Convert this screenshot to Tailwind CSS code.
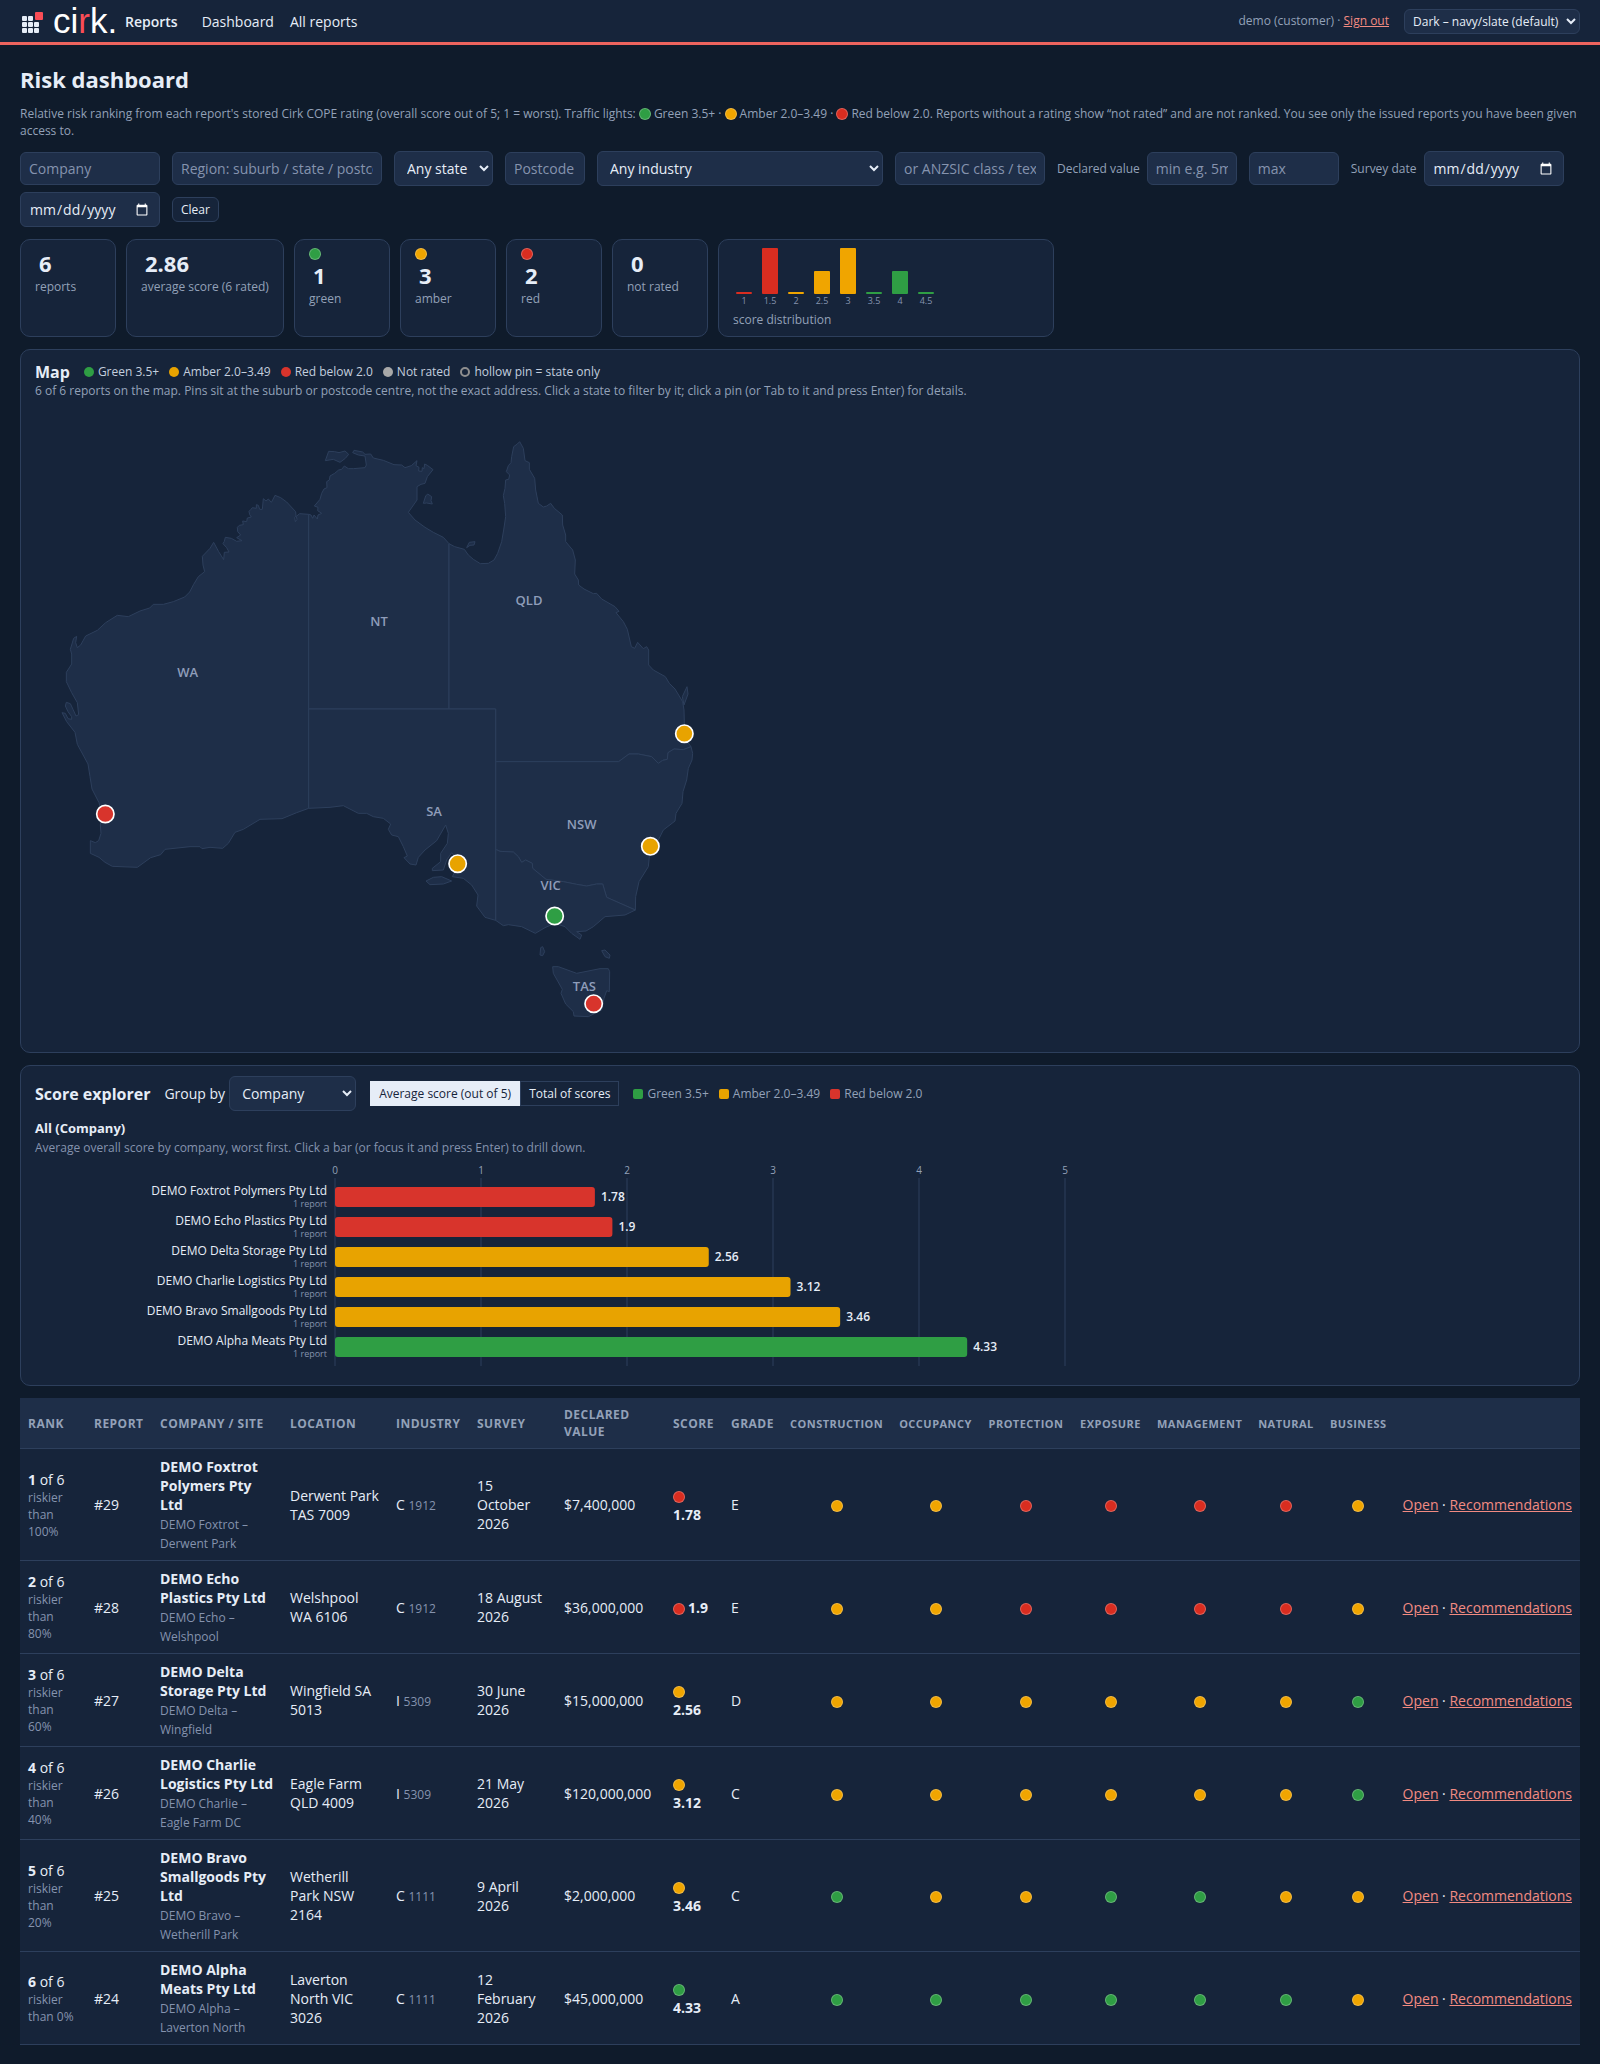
<!DOCTYPE html>
<html lang="en">
  <head>
    <meta charset="utf-8" />
    <title>Risk dashboard</title>
    <meta name="viewport" content="width=device-width, initial-scale=1.0" />
    <script src="https://cdn.jsdelivr.net/npm/@tailwindcss/browser@4"></script>
  </head>
  <body
    class="min-h-screen bg-[#0f1b2b] font-['Open_Sans',sans-serif] text-sm leading-[19px] text-[#e6edf7] scheme-dark"
  >
    <header
      class="flex h-[45px] items-center border-b-3 border-[#ee645e] bg-[#16243a] px-5"
    >
      <a href="#" aria-label="cirk." class="mr-2">
        <svg width="97" height="42" viewBox="0 0 97 42">
          <g fill="#e6edf7">
            <rect x="2" y="16" width="5" height="5" rx="1" />
            <rect x="8" y="16" width="5" height="5" rx="1" />
            <rect x="2" y="22" width="5" height="5" rx="1" />
            <rect x="8" y="22" width="5" height="5" rx="1" />
            <rect x="14" y="22" width="5" height="5" rx="1" />
            <rect x="2" y="28" width="5" height="5" rx="1" />
            <rect x="8" y="28" width="5" height="5" rx="1" />
            <rect x="14" y="28" width="5" height="5" rx="1" />
          </g>
          <rect x="15" y="12" width="8" height="8" rx="1" fill="#fa4d56" />
          <text
            x="33"
            y="33"
            font-size="35"
            fill="#ffffff"
            class="font-['Liberation_Sans',sans-serif]"
          >ci<tspan fill="#fa4d56">r</tspan>k.</text>
        </svg>
      </a>
      <span class="mr-6 font-semibold">Reports</span>
      <nav class="flex gap-4">
        <a href="#">Dashboard</a>
        <a href="#">All reports</a>
      </nav>
      <div class="ml-auto flex items-center gap-[15px] text-xs text-[#93a1b8]">
        <span
          >demo (customer) ·
          <a href="#" class="text-[#f28b82] underline">Sign out</a></span
        >
        <select
          aria-label="Theme"
          class="h-[25px] w-[176px] rounded-md border border-[#2d3f5c] bg-[#1e2e48] px-1 text-xs text-[#e6edf7]"
        >
          <option>Dark – navy/slate (default)</option>
        </select>
      </div>
    </header>

    <main class="px-5 pt-5 pb-4">
      <h1 class="text-[22px] leading-7 font-bold">Risk dashboard</h1>
      <p class="mt-3 text-xs leading-[17px] text-[#93a1b8]">
        Relative risk ranking from each report's stored Cirk COPE rating
        (overall score out of 5; 1 = worst). Traffic lights:
        <span class="mr-[3px] inline-block size-3 rounded-full border border-white/25 bg-[#2f9e44] align-[-2px]"></span>Green 3.5+ ·
        <span class="mr-[3px] inline-block size-3 rounded-full border border-white/25 bg-[#f0a500] align-[-2px]"></span>Amber 2.0–3.49 ·
        <span class="mr-[3px] inline-block size-3 rounded-full border border-white/25 bg-[#d92d20] align-[-2px]"></span>Red below 2.0. Reports without a rating show “not rated” and are not
        ranked. You see only the issued reports you have been given access to.
      </p>

      <form class="mt-3 flex flex-wrap items-center gap-x-3 gap-y-[6px]">
        <input
          type="text"
          aria-label="Company"
          placeholder="Company"
          class="h-[33px] w-[140px] rounded-md border border-[#2d3f5c] bg-[#1e2e48] px-2 placeholder:text-[#8593ae]"
        />
        <input
          type="text"
          aria-label="Region"
          placeholder="Region: suburb / state / postcode"
          class="h-[33px] w-[210px] rounded-md border border-[#2d3f5c] bg-[#1e2e48] px-2 placeholder:text-[#8593ae]"
        />
        <select
          aria-label="State"
          class="h-[35px] w-[99px] rounded-md border border-[#2d3f5c] bg-[#1e2e48] pr-0 pl-2"
        >
          <option>Any state</option>
        </select>
        <input
          type="text"
          aria-label="Postcode"
          placeholder="Postcode"
          class="h-[33px] w-[80px] rounded-md border border-[#2d3f5c] bg-[#1e2e48] px-2 placeholder:text-[#8593ae]"
        />
        <select
          aria-label="Industry"
          class="h-[35px] w-[286px] rounded-md border border-[#2d3f5c] bg-[#1e2e48] pr-0 pl-2"
        >
          <option>Any industry</option>
        </select>
        <input
          type="text"
          aria-label="ANZSIC class or text"
          placeholder="or ANZSIC class / text"
          class="h-[33px] w-[150px] rounded-md border border-[#2d3f5c] bg-[#1e2e48] px-2 placeholder:text-[#8593ae]"
        />
        <label class="flex items-center gap-[7px] text-xs text-[#93a1b8]">
          Declared value
          <input
            type="text"
            placeholder="min e.g. 5m"
            class="h-[33px] w-[90px] rounded-md border border-[#2d3f5c] bg-[#1e2e48] px-2 text-sm text-[#e6edf7] placeholder:text-[#8593ae]"
          />
        </label>
        <input
          type="text"
          aria-label="Maximum declared value"
          placeholder="max"
          class="h-[33px] w-[90px] rounded-md border border-[#2d3f5c] bg-[#1e2e48] px-2 placeholder:text-[#8593ae]"
        />
        <label class="flex items-center gap-[7px] text-xs text-[#93a1b8]">
          Survey date
          <input
            type="date"
            class="h-[35px] w-[140px] rounded-md border border-[#2d3f5c] bg-[#1e2e48] px-2 text-sm text-[#e6edf7]"
          />
        </label>
        <input
          type="date"
          aria-label="Survey date to"
          class="h-[35px] w-[140px] rounded-md border border-[#2d3f5c] bg-[#1e2e48] px-2"
        />
        <button
          type="button"
          class="h-[25px] rounded-md border border-[#2d3f5c] bg-[#16243a] px-2 text-xs"
        >
          Clear
        </button>
      </form>

      <!-- Summary cards -->
      <section class="mt-3 flex h-[98px] gap-[10px] text-xs leading-[17px] text-[#93a1b8]">
        <div class="w-24 rounded-[10px] border border-[#2d3f5c] bg-[#16243a] px-[14px] pt-[10px]">
          <b class="block pb-[2px] pl-1 text-[22px] leading-[26px] font-bold text-[#e6edf7]">6</b>reports
        </div>
        <div class="w-[158px] rounded-[10px] border border-[#2d3f5c] bg-[#16243a] px-[14px] pt-[10px] whitespace-nowrap">
          <b class="block pb-[2px] pl-1 text-[22px] leading-[26px] font-bold text-[#e6edf7]">2.86</b>average score (6 rated)
        </div>
        <div class="w-24 rounded-[10px] border border-[#2d3f5c] bg-[#16243a] px-[14px] pt-2">
          <i class="block size-3 rounded-full border border-white/25 bg-[#2f9e44]"></i>
          <b class="mt-[2px] block pb-[2px] pl-1 text-[22px] leading-[26px] font-bold text-[#e6edf7]">1</b>green
        </div>
        <div class="w-24 rounded-[10px] border border-[#2d3f5c] bg-[#16243a] px-[14px] pt-2">
          <i class="block size-3 rounded-full border border-white/25 bg-[#f0a500]"></i>
          <b class="mt-[2px] block pb-[2px] pl-1 text-[22px] leading-[26px] font-bold text-[#e6edf7]">3</b>amber
        </div>
        <div class="w-24 rounded-[10px] border border-[#2d3f5c] bg-[#16243a] px-[14px] pt-2">
          <i class="block size-3 rounded-full border border-white/25 bg-[#d92d20]"></i>
          <b class="mt-[2px] block pb-[2px] pl-1 text-[22px] leading-[26px] font-bold text-[#e6edf7]">2</b>red
        </div>
        <div class="w-24 rounded-[10px] border border-[#2d3f5c] bg-[#16243a] px-[14px] pt-[10px]">
          <b class="block pb-[2px] pl-1 text-[22px] leading-[26px] font-bold text-[#e6edf7]">0</b>not rated
        </div>
        <div class="w-[336px] rounded-[10px] border border-[#2d3f5c] bg-[#16243a] px-[14px] pt-2">
          <svg id="dist" width="214" height="63" viewBox="0 0 214 63" class="block"></svg>
          score distribution
        </div>
      </section>

      <!-- Map -->
      <section class="mt-3 rounded-[10px] border border-[#2d3f5c] bg-[#16243a] px-[14px] pt-3 pb-[13px]">
        <div class="flex items-center gap-[10px] text-xs leading-5 text-[#c3cede]">
          <h2 class="mr-1 text-base leading-5 font-bold text-[#e6edf7]">Map</h2>
          <span class="flex items-center gap-1"><i class="size-[10px] rounded-full bg-[#2f9e44]"></i>Green 3.5+</span>
          <span class="flex items-center gap-1"><i class="size-[10px] rounded-full bg-[#e8a300]"></i>Amber 2.0–3.49</span>
          <span class="flex items-center gap-1"><i class="size-[10px] rounded-full bg-[#d8342c]"></i>Red below 2.0</span>
          <span class="flex items-center gap-1"><i class="size-[10px] rounded-full bg-[#a8a8a8]"></i>Not rated</span>
          <span class="flex items-center gap-1"><i class="size-[10px] rounded-full border-2 border-[#8f8f8f]"></i>hollow pin = state only</span>
        </div>
        <p class="text-xs leading-[18px] text-[#93a1b8]">
          6 of 6 reports on the map. Pins sit at the suburb or postcode centre,
          not the exact address. Click a state to filter by it; click a pin (or
          Tab to it and press Enter) for details.
        </p>
        <svg viewBox="-15 -60 2100 1917" class="block w-full max-w-[700px]" role="img" aria-label="Map of Australia">
          <g fill="#1e2e48" stroke="#2d3f5c" stroke-width="3" stroke-linejoin="round">
            <path d="M806,283 779,281 769,289 771,298 766,305 764,292 768,289 767,275 740,246 722,233 705,226 698,240 694,247 685,237 678,243 670,236 667,268 659,268 655,256 649,254 649,265 637,263 633,268 627,274 629,284 634,291 622,294 620,305 608,303 610,314 598,316 592,322 593,335 602,345 590,353 606,362 590,364 574,355 556,352 553,364 549,371 560,383 567,396 553,397 551,419 536,395 521,367 510,385 487,409 489,435 494,455 475,470 461,493 449,516 434,531 400,545 370,553 340,553 329,564 300,573 265,590 232,586 197,608 172,631 137,648 122,675 112,683 107,668 110,649 101,655 91,688 95,702 95,732 79,757 79,785 95,818 112,848 116,884 108,888 99,868 91,851 79,847 76,858 84,875 95,890 95,898 84,896 76,880 66,878 80,905 105,937 112,973 144,1032 150,1070 156,1107 177,1148 185,1180 181,1215 183,1240 176,1262 166,1268 151,1262 151,1300 177,1312 195,1327 217,1339 292,1342 332,1313 362,1304 375,1288 450,1280 480,1280 486,1286 510,1282 548,1285 565,1270 585,1237 610,1228 660,1198 726,1196 770,1178 806,1165Z" />
            <path d="M806,283 813,285 818,295 822,285 832,297 834,285 845,280 833,272 834,262 823,258 840,238 845,220 852,207 861,203 860,185 868,180 870,168 884,160 896,150 905,148 913,138 925,146 940,146 975,143 979,135 975,108 955,105 938,98 942,91 968,96 975,103 992,102 1000,114 1030,121 1062,134 1085,135 1095,143 1114,137 1131,122 1128,137 1137,142 1136,153 1146,154 1147,143 1152,146 1154,132 1162,136 1179,149 1162,170 1155,190 1143,193 1131,200 1131,240 1105,277 1125,300 1155,322 1180,337 1210,352 1227,371 1227,867 806,867Z" />
            <path d="M856,122 866,94 884,95 897,98 915,93 926,103 916,115 900,127 880,118Z" />
            <path d="M1150,250 1157,228 1163,222 1175,230 1173,242 1177,252 1160,249Z" />
            <path d="M1280,383 1288,367 1305,365 1302,375 1290,376Z" />
            <path d="M1227,371 1244,380 1273,388 1285,405 1300,418 1321,431 1345,430 1362,420 1373,400 1385,365 1391,330 1397,290 1394,250 1390,227 1395,205 1397,180 1406,178 1409,165 1399,155 1405,137 1413,128 1415,110 1421,80 1432,72 1439,65 1450,85 1455,122 1468,128 1468,148 1484,175 1487,210 1495,250 1510,261 1520,258 1532,250 1543,265 1567,285 1568,315 1577,345 1577,365 1598,390 1606,420 1604,462 1615,480 1616,495 1632,507 1660,521 1670,520 1685,537 1725,560 1737,574 1728,578 1750,605 1762,628 1774,680 1784,685 1793,667 1810,686 1820,680 1826,690 1826,735 1840,750 1876,770 1888,790 1905,807 1928,845 1932,870 1933,910 1938,960 1953,980 1930,989 1902,987 1884,998 1882,1018 1868,1021 1855,1030 1835,1010 1795,1002 1767,1002 1736,1025 1367,1025 1367,867 1227,867Z" />
            <path d="M1927,830 1941,800 1944,822 1932,855Z" />
            <path d="M1367,1025 1736,1025 1767,1002 1795,1002 1835,1010 1855,1030 1868,1021 1882,1018 1884,998 1902,987 1930,989 1953,980 1958,1000 1956,1020 1945,1045 1940,1080 1929,1115 1926,1150 1908,1180 1905,1203 1870,1230 1855,1260 1835,1290 1828,1310 1825,1340 1797,1385 1787,1430 1786,1470 1700,1432 1688,1392 1670,1392 1640,1398 1610,1393 1570,1385 1518,1378 1478,1345 1477,1330 1457,1320 1445,1327 1435,1310 1420,1296 1380,1294 1367,1288Z" />
            <path d="M1367,1288 1380,1294 1420,1296 1435,1310 1445,1327 1457,1320 1477,1330 1478,1345 1518,1378 1570,1385 1610,1393 1640,1398 1670,1392 1688,1392 1700,1432 1786,1470 1755,1485 1695,1490 1660,1520 1638,1533 1610,1535 1625,1545 1620,1558 1595,1540 1575,1520 1544,1510 1515,1523 1486,1540 1445,1520 1405,1514 1390,1517 1367,1501Z" />
            <path d="M806,867H1367V1501L1335,1492 1310,1458 1314,1425 1295,1395 1270,1375 1237,1370 1245,1355 1255,1340 1245,1310 1235,1298 1220,1320 1210,1350 1177,1352 1177,1345 1202,1325 1202,1300 1222,1270 1225,1240 1217,1215 1190,1262 1155,1290 1135,1312 1128,1335 1110,1332 1092,1313 1102,1308 1090,1280 1075,1250 1055,1245 1045,1228 1052,1212 1030,1195 1000,1190 980,1180 955,1180 910,1157 870,1162 806,1165Z" />
            <path d="M1158,1383 1180,1372 1205,1370 1235,1383 1210,1392 1170,1394Z" />
            <path d="M1500,1605 1502,1583 1508,1580 1514,1595 1508,1607Z" />
            <path d="M1685,1592 1695,1590 1710,1605 1708,1615 1695,1610Z" />
            <path d="M1538,1640 1555,1640 1610,1660 1680,1646 1705,1646 1709,1655 1708,1715 1700,1712 1692,1735 1685,1770 1645,1790 1602,1788 1600,1775 1577,1752 1563,1720 1567,1708 1540,1660Z" />
          </g>
          <g fill="#8f9dba" font-size="39" font-weight="600" text-anchor="middle">
            <text x="443" y="771">WA</text>
            <text x="1017" y="618">NT</text>
            <text x="1467" y="556">QLD</text>
            <text x="1182" y="1188">SA</text>
            <text x="1625" y="1227">NSW</text>
            <text x="1532" y="1411">VIC</text>
            <text x="1633" y="1713">TAS</text>
          </g>
          <g stroke="#ffffff" stroke-width="5">
            <circle cx="196" cy="1182" r="26" fill="#d8342c" />
            <circle cx="1933" cy="941" r="26" fill="#e8a300" />
            <circle cx="1831" cy="1279" r="26" fill="#e8a300" />
            <circle cx="1253" cy="1331" r="26" fill="#e8a300" />
            <circle cx="1544" cy="1488" r="26" fill="#2f9e44" />
            <circle cx="1661" cy="1751" r="26" fill="#d8342c" />
          </g>
        </svg>
      </section>

      <!-- Score explorer -->
      <section class="mt-3 rounded-[10px] border border-[#2d3f5c] bg-[#16243a] px-[14px] pt-[10px] pb-[7px]">
        <div class="flex items-center gap-[14px]">
          <h2 class="text-base font-bold">Score explorer</h2>
          <label class="flex items-center gap-1">
            Group by
            <select class="h-[35px] w-[127px] rounded-md border border-[#2d3f5c] bg-[#1e2e48] pr-0 pl-2">
              <option>Company</option>
            </select>
          </label>
          <div class="flex text-xs">
            <button type="button" class="h-[25px] border border-[#e6edf7] bg-[#e6edf7] px-2 text-[#16243a]">Average score (out of 5)</button>
            <button type="button" class="h-[25px] border border-[#2d3f5c] px-2">Total of scores</button>
          </div>
          <div class="flex gap-[10px] text-xs text-[#93a1b8]">
            <span class="flex items-center gap-1"><i class="size-[10px] rounded-xs bg-[#2f9e44]"></i>Green 3.5+</span>
            <span class="flex items-center gap-1"><i class="size-[10px] rounded-xs bg-[#e8a300]"></i>Amber 2.0–3.49</span>
            <span class="flex items-center gap-1"><i class="size-[10px] rounded-xs bg-[#d8342c]"></i>Red below 2.0</span>
          </div>
        </div>
        <h3 class="mt-[7px] mb-px text-[13px] leading-5 font-bold">All (Company)</h3>
        <p class="text-xs leading-[18px] text-[#8593ae]">
          Average overall score by company, worst first. Click a bar (or focus
          it and press Enter) to drill down.
        </p>
        <svg id="bars" width="1060" height="216" viewBox="0 0 1060 216" class="mt-[5px] block"></svg>
      </section>

      <table class="mt-3 w-full table-fixed bg-[#16243a] text-left">
        <colgroup>
          <col class="w-[66px]" />
          <col class="w-[66px]" />
          <col class="w-[130px]" />
          <col class="w-[106px]" />
          <col class="w-[81px]" />
          <col class="w-[87px]" />
          <col class="w-[109px]" />
          <col class="w-[58px]" />
          <col class="w-[59px]" />
          <col class="w-[109px]" />
          <col class="w-[89px]" />
          <col class="w-[92px]" />
          <col class="w-[77px]" />
          <col class="w-[101px]" />
          <col class="w-[72px]" />
          <col class="w-[72px]" />
          <col class="w-[186px]" />
        </colgroup>
        <thead class="bg-[#1e2e48] text-xs leading-[17px] tracking-[0.04em] text-[#93a1b8] uppercase">
          <tr class="border-b border-[#2d3f5c]">
            <th class="p-2 font-bold">Rank</th>
            <th class="p-2 font-bold">Report</th>
            <th class="p-2 font-bold">Company / site</th>
            <th class="p-2 font-bold">Location</th>
            <th class="p-2 font-bold">Industry</th>
            <th class="p-2 font-bold">Survey</th>
            <th class="p-2 font-bold">Declared value</th>
            <th class="p-2 font-bold">Score</th>
            <th class="p-2 font-bold">Grade</th>
            <th class="p-2 text-center text-[11px] font-bold">Construction</th>
            <th class="p-2 text-center text-[11px] font-bold">Occupancy</th>
            <th class="p-2 text-center text-[11px] font-bold">Protection</th>
            <th class="p-2 text-center text-[11px] font-bold">Exposure</th>
            <th class="p-2 text-center text-[11px] font-bold">Management</th>
            <th class="p-2 text-center text-[11px] font-bold">Natural</th>
            <th class="p-2 text-center text-[11px] font-bold">Business</th>
            <th class="p-2" aria-label="Actions"></th>
          </tr>
        </thead>
        <tbody id="rows"></tbody>
      </table>
    </main>

    <script>
      const reports = [
        { id: 29, name: "Foxtrot Polymers", site: "DEMO Foxtrot – Derwent Park", loc: "Derwent Park TAS 7009", ind: "C", code: 1912, date: "15 October 2026", value: "$7,400,000", score: 1.78, grade: "E", lights: "AARRRRA", pct: 100 },
        { id: 28, name: "Echo Plastics", site: "DEMO Echo – Welshpool", loc: "Welshpool WA 6106", ind: "C", code: 1912, date: "18 August 2026", value: "$36,000,000", score: 1.9, grade: "E", lights: "AARRRRA", pct: 80 },
        { id: 27, name: "Delta Storage", site: "DEMO Delta – Wingfield", loc: "Wingfield SA 5013", ind: "I", code: 5309, date: "30 June 2026", value: "$15,000,000", score: 2.56, grade: "D", lights: "AAAAAAG", pct: 60 },
        { id: 26, name: "Charlie Logistics", site: "DEMO Charlie – Eagle Farm DC", loc: "Eagle Farm QLD 4009", ind: "I", code: 5309, date: "21 May 2026", value: "$120,000,000", score: 3.12, grade: "C", lights: "AAAAAAG", pct: 40 },
        { id: 25, name: "Bravo Smallgoods", site: "DEMO Bravo – Wetherill Park", loc: "Wetherill Park NSW 2164", ind: "C", code: 1111, date: "9 April 2026", value: "$2,000,000", score: 3.46, grade: "C", lights: "GAAGGAA", pct: 20 },
        { id: 24, name: "Alpha Meats", site: "DEMO Alpha – Laverton North", loc: "Laverton North VIC 3026", ind: "C", code: 1111, date: "12 February 2026", value: "$45,000,000", score: 4.33, grade: "A", lights: "GGGGGGA", pct: 0 },
      ];
      const dots = {
        R: "inline-block size-3 rounded-full border border-white/25 bg-[#d92d20] align-[-2px]",
        A: "inline-block size-3 rounded-full border border-white/25 bg-[#f0a500] align-[-2px]",
        G: "inline-block size-3 rounded-full border border-white/25 bg-[#2f9e44] align-[-2px]",
      };
      const fills = { R: "#d8342c", A: "#e8a300", G: "#2f9e44" };
      const band = (s) => (s < 2 ? "R" : s < 3.5 ? "A" : "G");

      document.getElementById("rows").innerHTML = reports
        .map(
          (r, i) => `
        <tr class="border-b border-[#2d3f5c]">
          <td class="p-2"><b class="font-bold">${i + 1}</b> of 6<span class="block text-xs leading-[17px] text-[#8593ae]">riskier than ${r.pct}%</span></td>
          <td class="p-2">#${r.id}</td>
          <td class="px-2 pt-2 pb-[7px]"><b class="block font-bold">DEMO ${r.name} Pty Ltd</b><span class="mt-px block text-xs leading-[19px] text-[#8593ae]">${r.site}</span></td>
          <td class="p-2">${r.loc}</td>
          <td class="p-2">${r.ind} <span class="text-xs text-[#8593ae]">${r.code}</span></td>
          <td class="p-2">${r.date}</td>
          <td class="p-2">${r.value}</td>
          <td class="p-2"><span class="mr-[3px] ${dots[band(r.score)]}"></span><b class="font-bold">${r.score}</b></td>
          <td class="p-2">${r.grade}</td>
          ${[...r.lights].map((l) => `<td class="p-2 text-center"><span class="${dots[l]}"></span></td>`).join("")}
          <td class="p-2 text-right whitespace-nowrap"><a href="#" class="text-[#f28b82] underline">Open</a> · <a href="#" class="text-[#f28b82] underline">Recommendations</a></td>
        </tr>`
        )
        .join("");

      // Horizontal bars, 146px per score point
      let svg = "";
      for (let n = 0; n <= 5; n++) {
        const x = 300 + n * 146;
        svg += `<line x1="${x}" x2="${x}" y1="16" y2="204" stroke="#2d3f5c" stroke-width="1" />
          <text x="${x}" y="12" font-size="10" fill="#93a1b8" text-anchor="middle">${n}</text>`;
      }
      reports.forEach((r, i) => {
        const y = 25 + i * 30;
        const w = r.score * 146;
        svg += `<text x="292" y="${y + 8}" font-size="12" fill="#e6edf7" text-anchor="end">DEMO ${r.name} Pty Ltd</text>
          <text x="292" y="${y + 20}" font-size="9" fill="#8593ae" text-anchor="end">1 report</text>
          <rect x="300" y="${y}" width="${w}" height="20" rx="3" fill="${fills[band(r.score)]}" />
          <text x="${306 + w}" y="${y + 14}" font-size="12" font-weight="600" fill="#e6edf7">${r.score}</text>`;
      });
      document.getElementById("bars").innerHTML = svg;

      // Score distribution histogram
      const bins = [
        ["1", 0, "#d92d20"],
        ["1.5", 2, "#d92d20"],
        ["2", 0, "#f0a500"],
        ["2.5", 1, "#f0a500"],
        ["3", 2, "#f0a500"],
        ["3.5", 0, "#2f9e44"],
        ["4", 1, "#2f9e44"],
        ["4.5", 0, "#2f9e44"],
      ];
      document.getElementById("dist").innerHTML = bins
        .map(([label, count, fill], i) => {
          const h = count * 23 || 2;
          return `<rect x="${3 + i * 26}" y="${46 - h}" width="16" height="${h}" rx="1" fill="${fill}" />
            <text x="${11 + i * 26}" y="56" font-size="9" fill="#8593ae" text-anchor="middle">${label}</text>`;
        })
        .join("");
    </script>
  </body>
</html>
